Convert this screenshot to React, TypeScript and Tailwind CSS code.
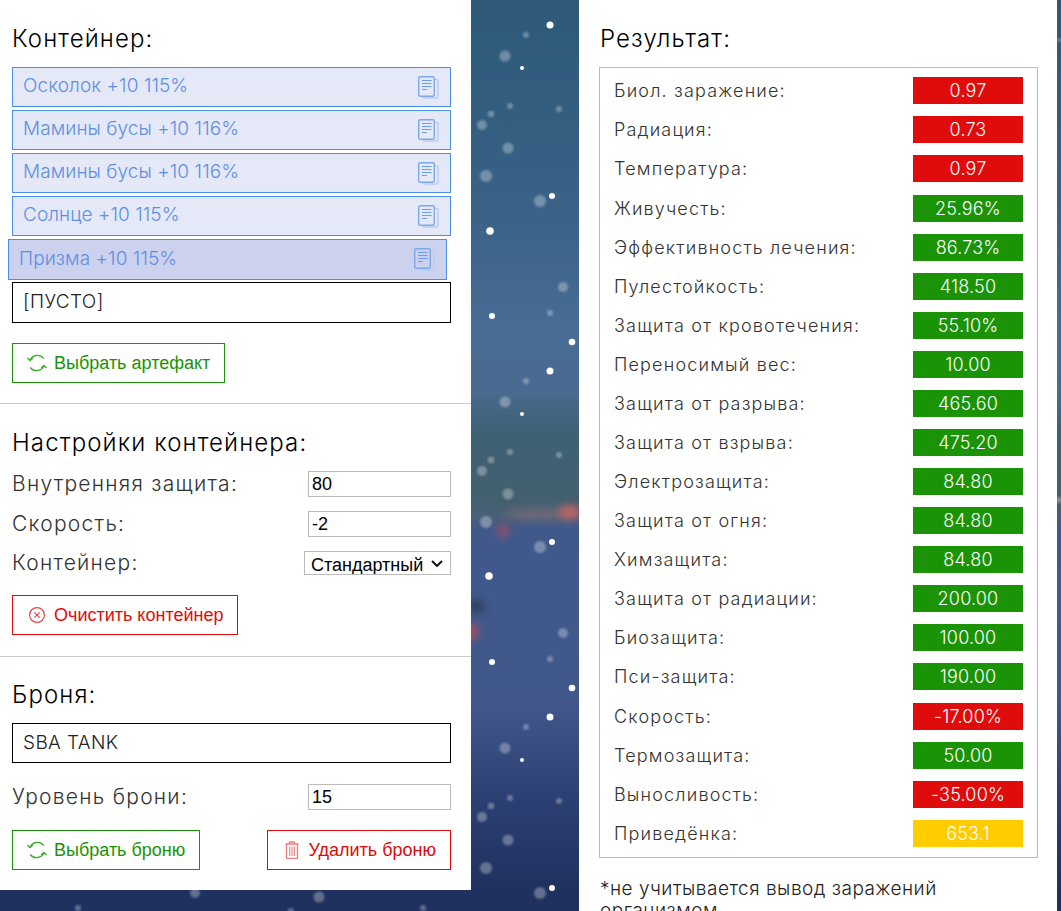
const labelFont = "font-['Inter','Noto_Sans',sans-serif]";

const results = [
  ['Биол. заражение:', '0.97', 'bad'],
  ['Радиация:', '0.73', 'bad'],
  ['Температура:', '0.97', 'bad'],
  ['Живучесть:', '25.96%', 'good'],
  ['Эффективность лечения:', '86.73%', 'good'],
  ['Пулестойкость:', '418.50', 'good'],
  ['Защита от кровотечения:', '55.10%', 'good'],
  ['Переносимый вес:', '10.00', 'good'],
  ['Защита от разрыва:', '465.60', 'good'],
  ['Защита от взрыва:', '475.20', 'good'],
  ['Электрозащита:', '84.80', 'good'],
  ['Защита от огня:', '84.80', 'good'],
  ['Химзащита:', '84.80', 'good'],
  ['Защита от радиации:', '200.00', 'good'],
  ['Биозащита:', '100.00', 'good'],
  ['Пси-защита:', '190.00', 'good'],
  ['Скорость:', '-17.00%', 'bad'],
  ['Термозащита:', '50.00', 'good'],
  ['Выносливость:', '-35.00%', 'bad'],
  ['Приведёнка:', '653.1', 'warn'],
];

const tones: Record<string, string> = {
  bad: 'bg-[#e00b0b]',
  good: 'bg-[#1a9306]',
  warn: 'bg-[#ffcc00]',
};

const bright = [
  [550, 25, 3.5], [522, 68, 2], [552, 196, 3], [490, 231, 3.8], [492, 316, 3],
  [572, 342, 3.3], [550, 371, 3.5], [522, 414, 2], [552, 542, 3], [489, 576, 3.8],
  [492, 662, 3], [572, 688, 3.3], [550, 717, 3.5], [522, 760, 2], [552, 888, 3],
];

const dim = [
  [526, 35, 3], [505, 56, 5.5], [510, 106, 3], [491, 114, 3.3], [482, 125, 5], [559, 109, 3],
  [508, 148, 5.5], [486, 176, 6], [540, 201, 6], [563, 287, 5], [550, 313, 3],
  [526, 381, 3], [505, 402, 5.5], [510, 452, 3], [491, 460, 3.3], [482, 471, 5], [559, 455, 3],
  [508, 494, 5.5], [486, 522, 6], [540, 547, 6], [563, 633, 5], [550, 659, 3],
  [526, 727, 3], [505, 748, 5.5], [510, 798, 3], [491, 806, 3.3], [482, 817, 5], [559, 801, 3],
  [508, 840, 5.5], [486, 868, 6], [540, 893, 6],
  [195, 893, 5], [319, 897, 5.5], [78, 908, 3], [423, 908, 3], [291, 911, 3], [1059, 40, 2], [1059, 500, 3],
];

function SkyDots() {
  return (
    <svg className="absolute inset-0" width="1061" height="911" viewBox="0 0 1061 911">
      <defs>
        <filter id="soft"><feGaussianBlur stdDeviation="1" /></filter>
        <filter id="glow" x="-100%" y="-300%" width="300%" height="700%"><feGaussianBlur stdDeviation="4" /></filter>
      </defs>
      <ellipse cx="540" cy="514" rx="36" ry="5" fill="#b07a78" opacity="0.4" filter="url(#glow)" />
      <ellipse cx="570" cy="512" rx="11" ry="7" fill="#e8665e" opacity="0.75" filter="url(#glow)" />
      <circle cx="503" cy="531" r="6" fill="#c84a55" opacity="0.7" filter="url(#glow)" />
      <ellipse cx="472" cy="632" rx="5" ry="8" fill="#e84848" opacity="0.8" filter="url(#glow)" />
      <ellipse cx="476" cy="606" rx="9" ry="6" fill="#1c2a3a" opacity="0.6" filter="url(#glow)" />
      {dim.map(([x, y, r], i) => (
        <circle key={i} cx={x} cy={y} r={r} fill="#ffffff" opacity="0.3" filter="url(#soft)" />
      ))}
      {bright.map(([x, y, r], i) => (
        <circle key={i} cx={x} cy={y} r={r} fill="#ffffff" />
      ))}
    </svg>
  );
}

function DocsIcon() {
  return (
    <svg width="21" height="23" viewBox="0 0 21 23" fill="none" className="shrink-0">
      <path d="M17 3.5h1.5a1.5 1.5 0 0 1 1.5 1.5v15.5a1.5 1.5 0 0 1-1.5 1.5H6.500a1.500 1.500 0 0 1-1.500-1.500V20" stroke="#b9cdf0" strokeWidth="1.4" />
      <rect x="0.7" y="0.7" width="15.600" height="19.600" rx="1.600" stroke="#7ea8ea" strokeWidth="1.4" />
      <path d="M4 4.500h9.500M4 7.500h9.500M4 10.500h9.500M4 13.500h5" stroke="#6f9ee8" strokeWidth="1.100" />
    </svg>
  );
}

function RefreshIcon() {
  return (
    <svg width="20" height="20" viewBox="0 0 20 20" fill="none" stroke="#3fae2f" strokeWidth="1.400" className="shrink-0">
      <path d="M3 7.500A8 8 0 0 1 16.800 5.500" />
      <path d="M17 12.500A8 8 0 0 1 3.200 14.500" />
      <path d="M0.500 5l2.500 2.500 2.800-2.300" />
      <path d="M19.500 15l-2.500-2.500-2.800 2.300" />
    </svg>
  );
}

function ClearIcon() {
  return (
    <svg width="16" height="16" viewBox="0 0 16 16" fill="none" stroke="#e8444a" strokeWidth="1.200" className="shrink-0">
      <circle cx="8" cy="8" r="7.400" />
      <path d="M5.300 5.300l5.400 5.400M10.700 5.300l-5.400 5.400" />
    </svg>
  );
}

function TrashIcon() {
  return (
    <svg width="14" height="18" viewBox="0 0 14 18" fill="none" stroke="#f08080" strokeWidth="1.400" className="shrink-0">
      <path d="M0.500 3h13M4.500 3V1h5v2" />
      <path d="M1.500 3v13.500a1 1 0 0 0 1 1h9a1 1 0 0 0 1-1V3" />
      <path d="M4.700 5.500v9.500M7 5.500v9.500M9.300 5.500v9.500" strokeWidth="1.100" />
    </svg>
  );
}

function Heading({ children, className = '' }: { children: React.ReactNode; className?: string }) {
  return (
    <h2 className={`h-[33px] text-[24px] leading-[33px] font-light text-black tracking-[0.046em] ${labelFont} ${className}`}>
      {children}
    </h2>
  );
}

function ArtifactRow({ name, active }: { name: string; active?: boolean }) {
  return (
    <div
      className={`flex items-center justify-between border border-[#4a90e2] pl-[10px] pr-[11px] text-[19px] font-light tracking-[0.004em] text-[#5f8fe4] ${labelFont} ${
        active ? '-ml-1 mr-1 mb-[2px] h-[41px] bg-[#ccd1ed]' : 'mb-[3px] h-[40px] bg-[#e4e8f7]'
      }`}
    >
      <span className="-mt-px">{name}</span>
      <DocsIcon />
    </div>
  );
}

function SlotBox({ text, className = '' }: { text: string; className?: string }) {
  return (
    <div className={`flex items-center border border-black pl-[10px] text-[19px] font-light text-[#222] tracking-[0.02em] ${labelFont} ${className}`}>
      {text}
    </div>
  );
}

function FieldLabel({ children }: { children: React.ReactNode }) {
  return <span className={`text-[21px] font-light text-[#333] tracking-[0.06em] ${labelFont}`}>{children}</span>;
}

function FieldRow({ label, value, className = '' }: { label: string; value: string; className?: string }) {
  return (
    <div className={`flex h-[26px] items-center justify-between ${className}`}>
      <FieldLabel>{label}</FieldLabel>
      <input
        defaultValue={value}
        className="h-[26px] w-[143px] border border-[#bbbbbb] bg-white px-[3px] font-['Liberation_Sans',sans-serif] text-[18px] text-black"
      />
    </div>
  );
}

function ActionButton({ tone, icon, label, className = '' }: { tone: 'green' | 'red'; icon: React.ReactNode; label: string; className?: string }) {
  const color = tone === 'green' ? 'border-[#1a9306] text-[#1a9306]' : 'border-[#e00b0b] text-[#e00b0b]';
  return (
    <button className={`flex h-[40px] items-center border bg-white font-['Liberation_Sans',sans-serif] text-[18px] ${color} ${className}`}>
      {icon}
      {label}
    </button>
  );
}

export default function App() {
  return (
    <div className="relative h-[911px] overflow-hidden bg-[linear-gradient(180deg,#2e5a78_0px,#335e80_120px,#3d648a_240px,#486d94_330px,#4a6a90_390px,#3f6175_430px,#43606f_500px,#4a5f7a_518px,#40598b_530px,#42588c_700px,#2c3f72_800px,#20315f_890px)]">
      <SkyDots />
      <div className="relative flex items-start">
        <div className="h-[890px] w-[471px] shrink-0 bg-white">
          <div className="pl-3 pr-5">
            <Heading className="mt-[22px] mb-[12px]">Контейнер:</Heading>
            <ArtifactRow name="Осколок +10 115%" />
            <ArtifactRow name="Мамины бусы +10 116%" />
            <ArtifactRow name="Мамины бусы +10 116%" />
            <ArtifactRow name="Солнце +10 115%" />
            <ArtifactRow name="Призма +10 115%" active />
            <SlotBox text="[ПУСТО]" className="h-[41px]" />
            <ActionButton
              tone="green"
              icon={<RefreshIcon />}
              label="Выбрать артефакт"
              className="mt-5 gap-[7px] pl-[14px] pr-[14px]"
            />
          </div>
          <div className="mt-5 border-t border-[#cccccc]" />
          <div className="pl-3 pr-5">
            <Heading className="mt-[22px]">Настройки контейнера:</Heading>
            <FieldRow label="Внутренняя защита:" value="80" className="mt-[12px]" />
            <FieldRow label="Скорость:" value="-2" className="mt-[14px]" />
            <div className="mt-[14px] flex h-[24px] items-center justify-between">
              <FieldLabel>Контейнер:</FieldLabel>
              <div className="relative">
                <select className="block h-[24px] w-[147px] appearance-none border border-[#bbbbbb] bg-white pl-[6px] font-['Liberation_Sans',sans-serif] text-[18px] text-black">
                  <option>Стандартный</option>
                </select>
                <svg
                  width="12"
                  height="7"
                  viewBox="0 0 12 7"
                  fill="none"
                  stroke="#111111"
                  strokeWidth="2"
                  className="pointer-events-none absolute right-[8px] top-[9px]"
                >
                  <path d="M1 1l5 5 5-5" />
                </svg>
              </div>
            </div>
            <ActionButton
              tone="red"
              icon={<ClearIcon />}
              label="Очистить контейнер"
              className="mt-5 gap-[9px] pl-[16px] pr-[14px]"
            />
          </div>
          <div className="mt-[21px] border-t border-[#cccccc]" />
          <div className="pl-3 pr-5">
            <Heading className="mt-[21px]">Броня:</Heading>
            <SlotBox text="SBA TANK" className="mt-[12px] h-[40px]" />
            <FieldRow label="Уровень брони:" value="15" className="mt-[21px]" />
            <div className="mt-5 flex justify-between">
              <ActionButton tone="green" icon={<RefreshIcon />} label="Выбрать броню" className="gap-[7px] pl-[14px] pr-[14px]" />
              <ActionButton tone="red" icon={<TrashIcon />} label="Удалить броню" className="gap-[10px] pl-[17px] pr-[14px]" />
            </div>
          </div>
        </div>

        <div className="ml-[108px] w-[478px] shrink-0 bg-white pl-5 pr-[19px]">
          <Heading className="mt-[22px] mb-[12px] pl-px">Результат:</Heading>
          <div className="flex flex-col gap-[12.09px] border border-[#bbbbbb] pt-[9.3px] pb-[10px] pl-[14px] pr-[14px]">
            {results.map(([label, value, tone]) => (
              <div key={label} className={`flex h-[27px] items-center justify-between ${labelFont}`}>
                <span className="text-[18px] font-light text-[#333] tracking-[0.065em]">{label}</span>
                <span className={`flex h-[27px] w-[110px] items-center justify-center text-[18px] font-light tracking-[0.01em] text-white ${tones[tone]}`}>
                  {value}
                </span>
              </div>
            ))}
          </div>
          <p className={`mt-[20px] w-[350px] pl-px text-[19px] leading-[22px] font-light text-[#222] tracking-[0.027em] ${labelFont}`}>
            *не учитывается вывод заражений организмом
          </p>
        </div>
      </div>
    </div>
  );
}
